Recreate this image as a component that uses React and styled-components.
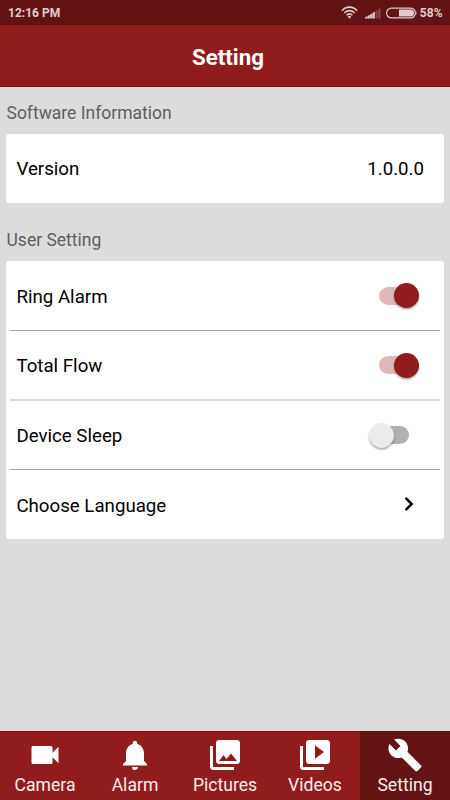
import React, { useState } from 'react';
import styled, { createGlobalStyle } from 'styled-components';
import { MdVideocam, MdNotifications, MdPhotoLibrary, MdVideoLibrary, MdBuild } from 'react-icons/md';

const primaryColor = "#911c1c";
const primaryDark = "#641315";
const edgeColor = "#850d0d";
const pageColor = "#dcdcdc";

const GlobalStyle = createGlobalStyle`
  * {
    box-sizing: border-box;
  }
  body {
    margin: 0;
    font-family: Roboto, sans-serif;
  }
`

const Screen = styled.div`
  display: flex;
  flex-direction: column;
  width: 450px;
  height: 800px;
  overflow: hidden;
  background-color: ${pageColor};
`

const StatusBar = styled.div`
  display: flex;
  align-items: center;
  flex: none;
  height: 25px;
  padding: 1px 7.5px 0 8px;
  background-color: ${primaryDark};
  color: #e0cccd;
  font-size: 12px;
  font-weight: bold;
`

const StatusTime = styled.span`
  flex: 1;
`

const StatusIcons = styled.svg`
  display: block;
  margin-right: 2px;
`

const Header = styled.div`
  flex: none;
  height: 62px;
  padding-left: 6px;
  line-height: 64px;
  background-color: ${primaryColor};
  border-bottom: 1px solid ${edgeColor};
  color: white;
  text-align: center;
  font-size: 22.3px;
  font-weight: bold;
`

const Main = styled.div`
  flex: 1;
  padding: 0 6px;
`

const SectionTitle = styled.div`
  height: ${props => props.height}px;
  padding-top: ${props => props.height - 32}px;
  padding-left: 0.5px;
  line-height: 22px;
  color: #5f5f5f;
  font-size: 17.5px;
`

const Card = styled.div`
  padding: 0 4px;
  border-radius: 3px;
  background-color: white;
`

const Row = styled.div`
  display: flex;
  align-items: center;
  justify-content: space-between;
  height: 69px;
  padding: 0 21px 0 6.4px;
  color: black;
  font-size: 18.7px;

  & + & {
    border-top: 1px solid #a6a6a6;
  }

  &:nth-child(n + 3) {
    height: 70px;
  }

  &:nth-child(3) {
    border-top: 2px solid #dadada;
  }
`

const RowLabel = styled.span`
  padding-top: 2px;
`

const Value = styled.span`
  margin-right: -5px;
`

const Switch = styled.button`
  display: flex;
  align-items: center;
  justify-content: ${props => props.$on ? 'flex-end' : 'flex-start'};
  position: relative;
  width: 40px;
  height: 26px;
  margin-right: ${props => props.$on ? 0 : 10}px;
  padding: 0;
  border: 0;
  background: none;

  &::before {
    content: "";
    position: absolute;
    top: 4px;
    left: ${props => props.$on ? 0 : 5}px;
    width: 35px;
    height: 18px;
    border-radius: 9px;
    background-color: ${props => props.$on ? '#dfb9b9' : '#b0b0b0'};
  }
`

const Thumb = styled.span`
  position: relative;
  width: 25px;
  height: 25px;
  border-radius: 50%;
  background-color: ${props => props.$on ? primaryColor : '#ebebeb'};
  box-shadow: 0 1.5px 2px rgba(0, 0, 0, 0.35);
`

const Chevron = styled.svg`
  display: block;
  margin-right: 5px;
`

const TabBar = styled.div`
  display: grid;
  grid-template-columns: repeat(5, 1fr);
  flex: none;
  height: 69px;
`

const Tab = styled.div`
  display: flex;
  flex-direction: column;
  align-items: center;
  padding-top: 5px;
  border-top: 1px solid ${props => props.$active ? '#570b0c' : edgeColor};
  background-color: ${props => props.$active ? primaryDark : primaryColor};
  color: white;
`

const TabLabel = styled.span`
  margin-top: 1px;
  line-height: 22px;
  color: #f8eeee;
  font-size: 17.6px;
`

const tabs = [
  { name: 'Camera', Icon: MdVideocam },
  { name: 'Alarm', Icon: MdNotifications },
  { name: 'Pictures', Icon: MdPhotoLibrary },
  { name: 'Videos', Icon: MdVideoLibrary },
  { name: 'Setting', Icon: MdBuild },
];

// wifi, signal strength and battery
const Indicators = () => (
  <StatusIcons width="77" height="16" viewBox="0 0 77 16" fill="none">
    <g stroke="#e0cccd" strokeWidth="1.6">
      <path d="M.9 5.7C5 .9 12 .9 16.1 5.7" />
      <path d="M3.3 8.1C6 4.8 11 4.8 13.7 8.1" />
      <path d="M5.6 10.2C7.2 8.4 9.8 8.4 11.4 10.2" />
    </g>
    <path d="M6.6 11.6Q8.5 10.1 10.4 11.6L8.5 13.7Z" fill="#e0cccd" />
    <path d="M24 13.5v-1.2l2.3-1v2.2zM26.6 13.5v-2.6l2.3-1.2v3.8zM29.2 13.5V9.5l2.3-1.2v5.2zM31.8 13.5V7.7l2-1.2v7z" fill="#e0cccd" />
    <path d="M34.5 13.5V6l1.9-1.1v8.6zM37 13.5V4.5l2.5-1.5v10.5z" fill="#82474a" />
    <rect x="45.6" y="3.1" width="28.8" height="9.8" rx="4.9" stroke="#e0cccd" strokeWidth="1.2" />
    <path d="M58 4.5h11.5a3.5 3.5 0 0 1 0 7H58z" fill="#e0cccd" />
    <path d="M75.3 6q1.4 2 0 4z" fill="#e0cccd" />
  </StatusIcons>
)

export default function App() {
  const [settings, setSettings] = useState({
    'Ring Alarm': true,
    'Total Flow': true,
    'Device Sleep': false,
  });

  const toggle = (name) => {
    setSettings({ ...settings, [name]: !settings[name] });
  }

  return (
    <Screen>
      <GlobalStyle />
      <StatusBar>
        <StatusTime>12:16 PM</StatusTime>
        <Indicators />
        <span>58%</span>
      </StatusBar>
      <Header>Setting</Header>
      <Main>
        <SectionTitle height={47}>Software Information</SectionTitle>
        <Card>
          <Row>
            <span>Version</span>
            <Value>1.0.0.0</Value>
          </Row>
        </Card>
        <SectionTitle height={58}>User Setting</SectionTitle>
        <Card>
          {Object.keys(settings).map(name => (
            <Row key={name}>
              <RowLabel>{name}</RowLabel>
              <Switch $on={settings[name]} aria-label={name} onClick={() => toggle(name)}>
                <Thumb $on={settings[name]} />
              </Switch>
            </Row>
          ))}
          <Row>
            <RowLabel>Choose Language</RowLabel>
            <Chevron width="10" height="16" viewBox="0 0 10 16" fill="none" stroke="black" strokeWidth="2.5">
              <path d="M1.6 .9L7.7 7l-6.1 6.1" />
            </Chevron>
          </Row>
        </Card>
      </Main>
      <TabBar>
        {tabs.map(({ name, Icon }) => (
          <Tab key={name} $active={name === 'Setting'}>
            <Icon size={36} />
            <TabLabel>{name}</TabLabel>
          </Tab>
        ))}
      </TabBar>
    </Screen>
  )
}
